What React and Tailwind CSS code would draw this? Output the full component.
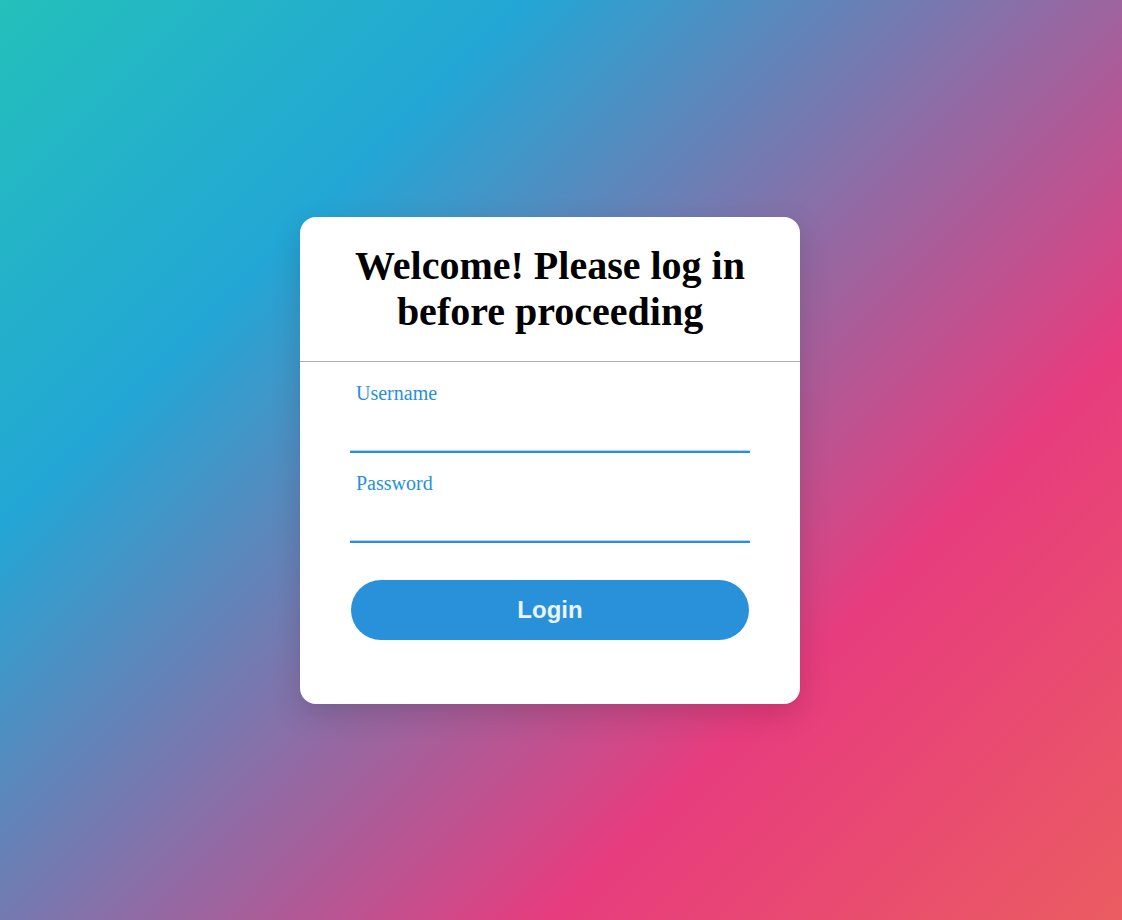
export default function App() {
  return (
    <div
      className="min-h-[920px] w-full flex items-center justify-center pr-[22px] bg-[linear-gradient(135deg,#24c0bb_0%,#23a6d5_26%,#e73c7e_72%,#eb5c61_100%)]"
    >
      <div className="w-[500px] bg-white rounded-2xl shadow-[0_10px_30px_rgba(0,0,0,0.15)]">
        <div className="pt-[26px] pb-[26px] border-b border-[#adadad]">
          <h1 className="text-center text-black font-bold text-[40px] leading-[46px] font-['Liberation_Serif','Times_New_Roman',serif]">
            Welcome! Please log in
            <br />
            before proceeding
          </h1>
        </div>
        <form className="px-[50px] pt-[20px] pb-[64px] font-['Liberation_Serif','Times_New_Roman',serif]">
          <div className="border-b-2 border-[#2691d9]">
            <label className="block pl-[6px] text-[20px] leading-[23px] text-[#2691d9]">Username</label>
            <input type="text" className="block w-full h-[46px] bg-transparent outline-none px-[6px] text-[16px] border-b border-[#b3d5ee]" />
          </div>
          <div className="mt-[19px] border-b-2 border-[#2691d9]">
            <label className="block pl-[6px] text-[20px] leading-[23px] text-[#2691d9]">Password</label>
            <input type="password" className="block w-full h-[46px] bg-transparent outline-none px-[6px] text-[16px] border-b border-[#b3d5ee]" />
          </div>
          <div className="px-[1px] mt-[37px]">
            <button
              type="button"
              className="w-full h-[60px] rounded-full bg-[#2891d9] text-[#e9f4fb] font-bold text-[24px] font-['Liberation_Sans',Arial,sans-serif]"
            >
              Login
            </button>
          </div>
        </form>
      </div>
    </div>
  );
}
